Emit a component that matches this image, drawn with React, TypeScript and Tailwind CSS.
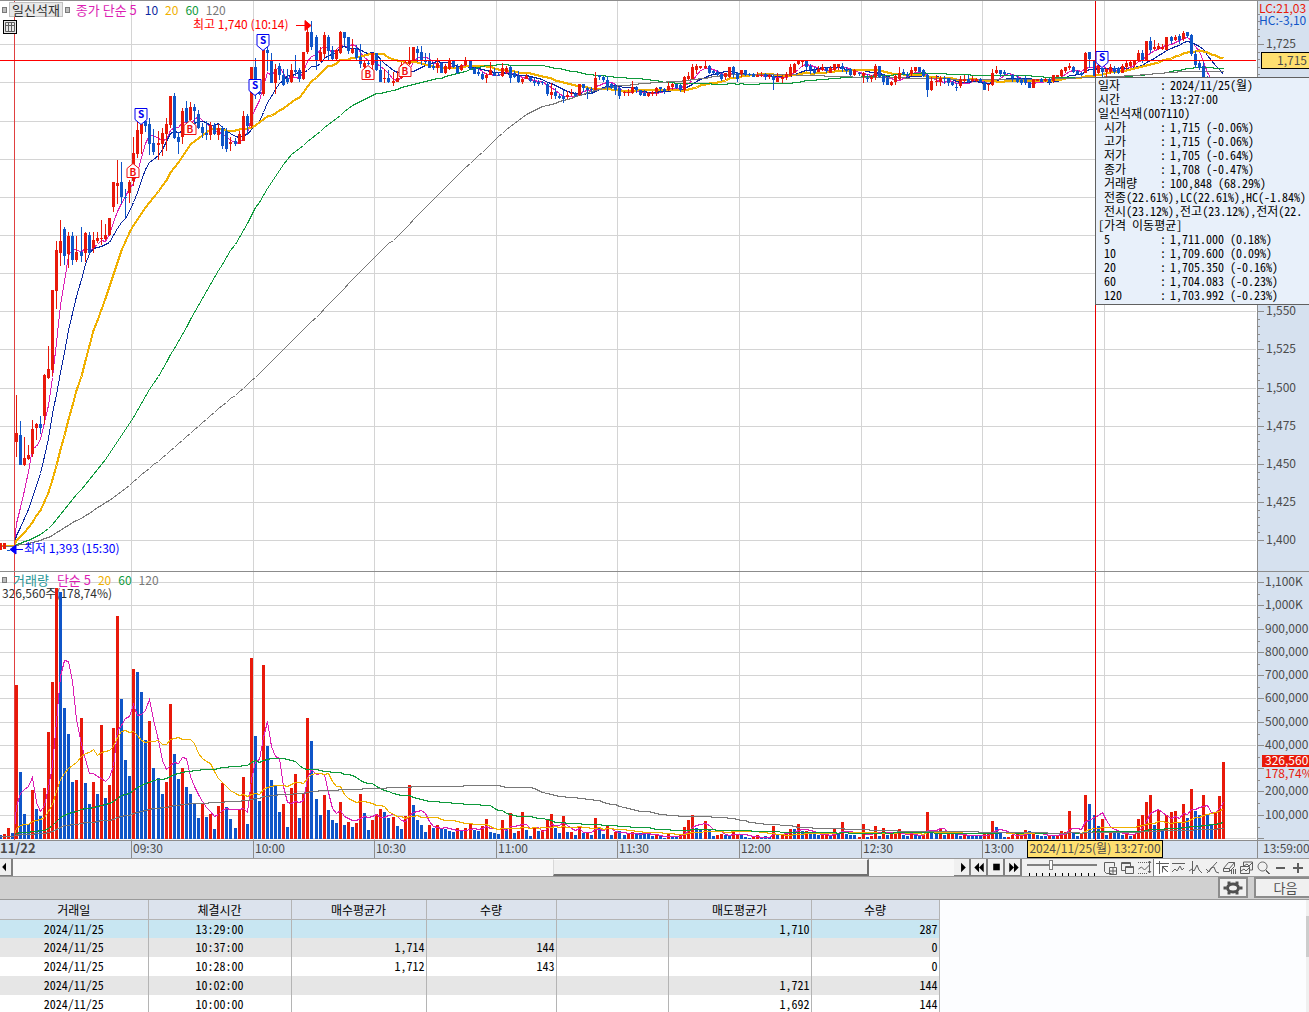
import React from "react";

const CHART_W = 1257;
const PRICE_H = 570;
const VOLUME_H = 268;
const BASELINE = 267;

// one token per minute: direction, then high / body top / body bottom / low
const CANDLES = `
r395/433/442/457 b421/435/465/465 r437/458/465/466 r445/455/459/460 r420/429/454/457 r423/424/428/440
b416/424/428/434 r374/375/416/424 r346/369/378/379 r290/290/370/376 r241/250/291/309 r220/241/253/266
b227/229/256/265 r232/236/254/268 b232/236/260/265 r236/252/260/262 b227/252/256/262 r232/233/253/262
b232/235/253/254 r232/240/248/253 r232/238/241/243 r220/238/239/245 r224/235/239/240 r218/218/235/236
r182/182/207/212 r160/183/186/204 b162/182/197/204 b189/197/198/218 r180/182/193/203 r137/153/181/186
r122/130/154/158 r122/124/134/154 b120/121/126/132 b118/124/144/155 b129/143/152/155 r131/143/145/160
r128/133/144/156 r118/124/134/151 r96/96/125/128 b93/96/138/139 b132/137/142/154 r108/111/137/144
b101/108/122/124 r102/107/120/124 b104/107/111/124 b110/114/128/129 b123/127/133/138 b121/133/135/140
r122/125/135/140 b123/125/134/135 r124/128/135/140 b126/128/146/149 b128/131/149/152 r137/142/144/151
b138/141/144/146 r131/134/144/144 r111/116/141/141 b114/116/126/135 r67/67/126/128 b58/67/95/99
b90/92/94/95 r50/50/94/96 b47/50/53/71 b53/60/83/83 r64/69/83/94 b63/66/75/80
b69/75/85/86 b69/78/82/84 r64/70/82/83 b55/70/72/76 b68/70/79/82 r52/52/79/80
r28/32/52/54 b21/32/47/50 b35/37/61/70 r47/52/60/62 r32/35/54/58 b35/37/51/60
b46/50/59/60 r49/50/59/60 r31/32/53/54 b32/32/38/46 b37/37/51/54 r39/49/53/54
b45/49/58/60 b44/57/64/68 r61/63/67/69 b60/63/64/65 r53/53/65/69 b53/53/70/71
b58/70/82/82 r69/78/79/83 b70/78/82/83 r72/81/83/86 r71/78/82/82 r62/65/78/79
r60/62/66/68 r47/60/64/65 r47/47/60/60 b46/49/53/62 b46/52/61/65 b53/61/62/64
b53/61/68/68 b62/66/68/70 r58/63/68/73 b62/63/73/73 r64/66/73/74 r58/61/69/70
b60/61/67/68 b64/67/73/74 r64/65/70/71 r57/60/65/66 b60/61/69/70 b67/68/74/74
b68/72/74/76 b72/74/79/80 r73/75/78/83 r62/70/75/75 b68/73/76/76 b72/75/76/76
r63/68/76/77 r66/68/72/74 b66/67/78/83 b71/73/77/78 b71/76/82/83 r78/79/82/84
r74/76/79/79 b77/77/81/82 b78/81/83/86 b80/82/84/86 b81/82/83/85 b83/84/94/96
r83/92/95/99 b88/92/96/99 b94/96/98/99 b90/96/99/103 r91/95/97/99 r89/93/94/96
b92/94/96/97 r84/84/95/96 b84/84/88/92 b87/88/90/99 b87/89/90/94 r72/78/90/90
b75/75/77/80 b76/77/80/82 b76/80/87/91 b83/84/88/89 b84/86/90/95 b87/88/96/99
r91/92/93/96 r89/92/93/96 r81/87/93/94 b86/87/90/93 b90/90/95/96 b90/93/96/96
r92/93/96/97 r91/92/94/96 r87/88/92/96 b87/87/89/93 b88/89/91/94 r82/86/90/91
r83/84/87/90 b84/84/88/89 b84/85/90/92 r76/77/90/93 r72/76/79/80 r64/67/79/79
r64/66/70/74 r66/66/68/69 r60/66/68/69 b65/66/73/74 b70/71/73/74 b70/72/75/76
b73/74/79/81 r73/73/77/80 r67/67/77/78 b66/67/74/78 b72/73/79/82 r70/70/74/77
b70/70/75/76 b73/74/75/76 b73/74/77/77 r72/75/77/77 r72/75/76/77 b73/74/77/80
r74/75/77/79 b75/76/80/90 r73/78/82/82 r75/77/79/83 r72/74/77/80 r64/67/76/76
r63/64/73/73 r60/61/64/65 r61/61/62/67 b61/61/67/70 b64/66/70/74 b67/70/73/74
r66/69/72/72 r64/67/70/71 b67/68/71/73 r66/68/73/73 r64/64/70/71 r64/64/67/70
b63/66/69/72 b67/69/71/74 b68/69/75/76 r69/70/75/76 b72/73/74/76 r72/73/76/83
b74/78/79/82 r75/77/79/82 r64/66/77/80 b66/66/77/78 b74/76/82/85 b76/78/85/85
r81/82/85/86 r75/76/82/85 r67/73/79/80 b69/72/74/75 b72/74/76/78 r67/70/74/76
r67/67/71/72 b67/67/72/72 b69/70/76/77 b73/75/90/97 r77/81/90/91 r75/81/82/86
r76/78/82/86 b76/78/79/84 b78/78/83/86 b81/82/85/86 b83/87/88/91 r76/79/86/88
r75/79/81/83 b75/79/82/83 r76/79/81/82 r78/79/81/82 b78/79/82/83 b81/82/90/90
r84/84/85/91 r69/73/85/86 r66/70/73/74 b70/70/74/77 b70/72/74/75 b73/73/74/74
b74/75/78/82 b75/78/82/83 b78/80/83/85 b76/79/83/85 b82/82/88/88 r79/79/88/88
r79/79/81/81 b78/79/82/82 r78/79/81/82 b78/79/82/85 r75/75/81/83 r75/75/77/77
r69/70/76/77 r67/67/71/73 r63/66/68/70 b66/67/72/73 b70/71/74/75 b72/73/75/76
r52/53/73/73 b52/52/59/68 b60/60/76/76 r63/65/73/74 b68/68/72/77 r68/69/72/77
r64/67/72/74 b66/68/72/74 b67/68/73/74 r64/66/73/73 r60/63/67/70 r61/62/66/67
r60/61/65/67 r50/53/60/62 b50/53/60/63 r41/41/60/60 b37/41/50/53 r40/47/49/50
r43/46/49/50 r44/47/49/50 r37/37/50/50 b36/37/41/44 r35/37/40/41 b34/36/40/44
r31/33/39/41 b32/32/36/38 b34/35/54/56 b51/54/65/68 b61/63/68/70 b62/66/83/84
b76/78/88/90 b82/84/92/94 r86/88/93/95 r84/86/92/93 r82/84/90/92`;

// one token per minute: direction and bar height
const VOLUMES = `
r154 b67 b25 b15 r49 b30 b23 r51 r107 r157 r251 b247 b131 b105 b57 r59 r121 b56 b35 r57
b45 r114 b41 r54 r111 r223 b140 b79 b63 r170 b167 b147 b99 r118 b71 b61 b45 r57 r135 b85
b60 r71 b52 b45 b35 b21 r35 b22 r25 b10 r33 r56 b32 b20 b11 r29 r62 b15 r181 b103
b38 r174 b93 b59 b53 b27 r35 b12 r51 r65 b21 r46 r121 b98 b40 b24 r44 b29 b19 b16
r37 b14 r17 b12 r16 r45 b26 b9 r19 r25 r30 b27 b21 r22 b13 b10 r23 r54 b34 b19
b14 b7 r14 b11 r14 b11 b10 b8 b7 r11 b8 r11 r15 b9 b8 r13 r20 b7 b6 b5
r19 b10 r26 b6 r8 r27 b9 b3 r12 b8 r9 r19 r25 b11 b6 r23 b7 r7 b4 r13
b6 r6 b4 r21 b11 b5 r13 b4 r7 b8 b4 r5 r7 b5 b6 b6 b5 b3 r4 b3
b1 r6 b3 b3 r4 r12 r19 r24 b11 b9 r18 b9 b3 r4 r5 b4 b4 r8 r4 b5
b2 b1 r2 r4 b1 b3 b2 r13 b4 r4 r6 r10 b10 r15 b8 r8 b5 b5 b4 r4
r5 b4 r10 b5 r17 b5 b4 b4 r2 r15 b2 r3 r13 b3 r11 b4 r5 r5 r10 b4
b3 r6 b4 b3 r4 r27 b7 b5 r10 b4 r6 r5 b5 b3 r5 b4 b3 b3 b4 r5
r7 r18 b12 b6 b2 r2 r4 r6 r5 r9 b8 r6 b4 b3 b3 r4 b4 r4 r8 r7
r28 b7 b3 r6 r44 b35 b24 b13 r20 b4 r6 b7 b7 b4 r6 b3 r5 r20 r24 r37
r44 b14 r29 b9 r24 r27 r28 b16 r35 b21 r50 b28 b24 r44 b25 b15 r26 r43 r77`;

const UP = "#e8190a";
const DOWN = "#0f55c8";
const GRID = "#d4d4d4";

const candles = CANDLES.trim().split(/\s+/).map((token) => {
  const [high, top, bottom, low] = token.slice(1).split("/").map(Number);
  const up = token[0] === "r";
  return { up, high, top, bottom, low, close: up ? top : bottom };
});

const volumes = VOLUMES.trim().split(/\s+/).map((token) => ({
  up: token[0] === "r",
  height: Number(token.slice(1)),
}));

const slotX = (i: number) => Math.floor(16.2 + 4.052 * i);

function average(values: number[], before: number, period: number) {
  return values.map((_, i) => {
    let sum = 0;
    for (let k = i - period + 1; k <= i; k++) sum += k < 0 ? before : values[k];
    return sum / period;
  });
}

const toPoints = (values: number[], startY: number) =>
  `0,${startY} 14,${startY} ` +
  values.map((v, i) => `${slotX(i) + 0.5},${Math.round(v) + 0.5}`).join(" ");

const closes = candles.map((c) => c.close);
const heights = volumes.map((v) => v.height);

const priceLines = [
  { period: 5, color: "#dc1eb4", width: 1 },
  { period: 10, color: "#0a28a0", width: 1 },
  { period: 20, color: "#f0b000", width: 2 },
  { period: 60, color: "#0f9a3c", width: 1 },
  { period: 120, color: "#787878", width: 1 },
].map((l) => ({ ...l, points: toPoints(average(closes, 546, l.period), 546) }));

const volumeLines = [
  { period: 5, color: "#dc1eb4" },
  { period: 20, color: "#f0b000" },
  { period: 60, color: "#0f9a3c" },
  { period: 120, color: "#787878" },
].map((l) => ({
  ...l,
  points: toPoints(average(heights, 3, l.period).map((v) => BASELINE - v), BASELINE - 3),
}));

const gridX = [131, 253, 374, 496, 617, 739, 861, 982, 1104];
const priceGridY = [44, 82, 121, 159, 197, 235, 273, 311, 349, 388, 426, 464, 502, 540];
const volumeGridY = [10, 33, 57, 80, 103, 126, 150, 173, 196, 219, 243, 266];

const markers = [
  { side: "S", x: 141, y: 108 },
  { side: "S", x: 255, y: 79 },
  { side: "S", x: 263, y: 34 },
  { side: "S", x: 1102, y: 51 },
  { side: "B", x: 133, y: 163 },
  { side: "B", x: 190, y: 120 },
  { side: "B", x: 368, y: 65 },
  { side: "B", x: 405, y: 62 },
];

function Marker({ side, x, y }: { side: string; x: number; y: number }) {
  const sell = side === "S";
  const color = sell ? "#0000f0" : "#f01010";
  const d = sell
    ? `M${x - 6} ${y + 0.5}h12v11l-6 5l-6 -5z`
    : `M${x} ${y + 0.5}l6 5v9h-12v-9z`;
  return (
    <g>
      <path d={d} fill="#fff" stroke={color} />
      <text x={x} y={sell ? y + 10 : y + 13} textAnchor="middle" fill={color} className="text-[10px] font-bold">
        {side}
      </text>
    </g>
  );
}

function PriceChart() {
  return (
    <svg
      viewBox={`0 0 ${CHART_W} ${PRICE_H}`}
      preserveAspectRatio="none"
      className="block h-[570px] w-full"
      role="img"
      aria-label="가격 차트"
    >
      <g fill={GRID} shapeRendering="crispEdges">
        {priceGridY.map((y) => <rect key={y} x={0} y={y - 1} width={1256} height={1} />)}
        {gridX.map((x) => <rect key={x} x={x} y={0} width={1} height={PRICE_H} />)}
      </g>
      <g fill="none" shapeRendering="crispEdges" transform="translate(0 -1)">
        {priceLines.map((l) => (
          <polyline key={l.period} points={l.points} stroke={l.color} strokeWidth={l.width} />
        ))}
      </g>
      <g shapeRendering="crispEdges" transform="translate(0 -1)">
        <rect x={0} y={543} width={2} height={7} fill={UP} />
        <rect x={3} y={543} width={3} height={6} fill={UP} />
        <rect x={7} y={550} width={3} height={1} fill={DOWN} />
        {candles.map((c, i) => (
          <g key={i} fill={c.up ? UP : DOWN}>
            <rect x={slotX(i)} y={c.high} width={1} height={c.low - c.high} />
            <rect x={slotX(i) - 1} y={c.top} width={3} height={Math.max(1, c.bottom - c.top)} />
          </g>
        ))}
      </g>
      <g shapeRendering="crispEdges">
        <rect x={14} y={0} width={1} height={PRICE_H} fill="#e04040" />
        <rect x={0} y={59} width={1256} height={1} fill="#ff0000" />
        <rect x={1095} y={0} width={1} height={PRICE_H} fill="#e80000" />
      </g>
      <g transform="translate(0 -1)">
        {markers.map((m) => <Marker key={`${m.side}${m.x}`} {...m} />)}
      </g>
      <text x={193} y={28} fill="#ff0000">최고 1,740 (10:14)</text>
      <path d="M296 24.5h10M305 19.5l6 5l-6 5z" fill="#ff0000" stroke="#ff0000" />
      <text x={24} y={552} fill="#0000ff">최저 1,393 (15:30)</text>
      <path d="M23 548.5h-8M16 544l-6 4.500l6 4.500z" fill="#0000ff" stroke="#0000ff" />
    </svg>
  );
}

function VolumeChart() {
  return (
    <svg
      viewBox={`0 0 ${CHART_W} ${VOLUME_H}`}
      preserveAspectRatio="none"
      className="relative block h-[268px] w-full"
      role="img"
      aria-label="거래량 차트"
    >
      <g shapeRendering="crispEdges">
        {volumeGridY.map((y) => <rect key={y} x={0} y={y} width={1256} height={1} fill={GRID} />)}
        {gridX.map((x) => <rect key={x} x={x} y={0} width={1} height={VOLUME_H} fill={GRID} />)}
        <rect x={0} y={263} width={2} height={4} fill={DOWN} />
        <rect x={3} y={262} width={3} height={5} fill={UP} />
        <rect x={7} y={256} width={3} height={11} fill={UP} />
        <rect x={11} y={261} width={3} height={6} fill={DOWN} />
        {volumes.map((v, i) => (
          <rect key={i} x={slotX(i) - 1} y={BASELINE - v.height} width={3} height={v.height} fill={v.up ? UP : DOWN} />
        ))}
        {volumeLines.map((l) => (
          <polyline key={l.period} points={l.points} fill="none" stroke={l.color} />
        ))}
        <rect x={14} y={0} width={1} height={VOLUME_H} fill="#e04040" />
        <rect x={1095} y={0} width={1} height={VOLUME_H} fill="#e80000" />
      </g>
    </svg>
  );
}

// levels behind the info box get a tick but no label
const priceLabel = (y: number, i: number) => (y > 90 && y < 300 ? null : (1725 - 25 * i).toLocaleString("en-US"));

function PriceAxis() {
  return (
    <svg className="block h-[570px] w-full" fill="#4b4b4b" aria-label="가격 축" role="img">
      {priceGridY.map((y, i) => (
        <g key={y}>
          <rect x={0} y={y - 1} width={6} height={1} fill="#8c8c8c" />
          {[8, 15, 23, 30].map((dy) => (
            <rect key={dy} x={0} y={y - 1 - dy} width={2} height={1} fill="#8c8c8c" />
          ))}
          {priceLabel(y, i) && <text x={8} y={y + 3}>{priceLabel(y, i)}</text>}
        </g>
      ))}
      <text x={1} y={12} fill="#e8190a">LC:21,03</text>
      <text x={1} y={24} fill="#0f55c8">HC:-3,10</text>
      <rect x={3.5} y={51.5} width={60} height={16} fill="#ffe070" stroke="#000" />
      <text x={19} y={64}>1,715</text>
    </svg>
  );
}

function VolumeAxis() {
  const labels = ["1,100K", "1,000K", "900,000", "800,000", "700,000", "600,000", "500,000", "400,000", "", "200,000", "100,000", ""];
  return (
    <svg className="block h-[268px] w-full" fill="#4b4b4b" aria-label="거래량 축" role="img">
      {volumeGridY.map((y, i) => (
        <g key={y}>
          <rect x={0} y={y} width={6} height={1} fill="#8c8c8c" />
          {i < 11 && <rect x={0} y={y + 12} width={2} height={1} fill="#8c8c8c" />}
          <text x={7} y={y + 4}>{labels[i]}</text>
        </g>
      ))}
      <rect x={4} y={183} width={60} height={12} fill="#e8190a" />
      <text x={7} y={193} fill="#fff">326,560</text>
      <text x={7} y={206} fill="#e8190a">178,74%</text>
    </svg>
  );
}

const Dot = () => <span className="h-[6px] w-[5px] shrink-0 border border-[#7a7a7a] bg-[#bdbdbd]" />;

const ohlc = [
  ["시가", "1,715 (-0.06%)"],
  ["고가", "1,715 (-0.06%)"],
  ["저가", "1,705 (-0.64%)"],
  ["종가", "1,708 (-0.47%)"],
  ["거래량", "100,848 (68.29%)"],
];

const averages = [
  ["5", "1,711.000 (0.18%)"],
  ["10", "1,709.600 (0.09%)"],
  ["20", "1,705.350 (-0.16%)"],
  ["60", "1,704.083 (-0.23%)"],
  ["120", "1,703.992 (-0.23%)"],
];

function InfoRow({ label, value, indent = true }: { label: string; value: string; indent?: boolean }) {
  return (
    <div className="flex">
      <span className={indent ? "w-[62px] pl-[6px]" : "w-[62px]"}>{label}</span>
      <span className="w-[10px]">:</span>
      <span>{value}</span>
    </div>
  );
}

function InfoBox() {
  return (
    <div className="absolute top-[76px] right-0 w-[214px] overflow-hidden border border-r-0 border-[#606060] bg-[#e8f0fa] pb-[2px] pl-[2px] font-['Noto_Sans_Mono_CJK_KR','Noto_Sans_CJK_KR',monospace] text-[12px] leading-[14px] whitespace-nowrap text-black">
      <InfoRow label="일자" value="2024/11/25(월)" indent={false} />
      <InfoRow label="시간" value="13:27:00" indent={false} />
      <div>일신석재(007110)</div>
      {ohlc.map(([label, value]) => <InfoRow key={label} label={label} value={value} />)}
      <div className="pl-[6px]">전종(22.61%),LC(22.61%),HC(-1.84%)</div>
      <div className="pl-[6px]">전시(23.12%),전고(23.12%),전저(22.</div>
      <div>[가격 이동평균]</div>
      {averages.map(([label, value]) => <InfoRow key={label} label={label} value={value} />)}
    </div>
  );
}

const hours = ["09:30", "10:00", "10:30", "11:00", "11:30", "12:00", "12:30", "13:00", ""];

function TimeAxis() {
  return (
    <div className="flex h-[18px] border-t border-[#8c8c8c] bg-[#d6e1ef] leading-[14px] text-[#4b4b4b]">
      <div className="relative grid min-w-0 flex-1 grid-cols-[131fr_122fr_121fr_122fr_121fr_122fr_122fr_121fr_122fr_153fr]">
        <span className="text-[13px] font-bold">11/22</span>
        {hours.map((h) => <span key={h} className="border-l border-[#8c8c8c] pl-px">{h}</span>)}
        <span className="absolute -top-px left-[81.7%] h-[18px] w-[136px] border border-black bg-[#ffe070] text-center whitespace-nowrap">
          2024/11/25(월) 13:27:00
        </span>
      </div>
      <div className="w-[52px] shrink-0 overflow-hidden border-l border-[#8c8c8c] pl-[5px]">13:59:00</div>
    </div>
  );
}

const playback = [
  { name: "재생", d: "M7 4l5 5l-5 5z" },
  { name: "뒤로", d: "M8 4v10l-5 -5zM13 4v10l-5 -5z" },
  { name: "정지", d: "M5 5h7v7h-7z" },
  { name: "앞으로", d: "M4 4v10l5 -5zM9 4v10l5 -5z" },
];

const tools = [
  { name: "차트 추가", d: "M9.500 14.500h-5l-2 -2v-9h10v4M7.500 8.500h7v7h-7zM11 8.500v7M7.500 12h7" },
  { name: "차트 겹치기", d: "M6.500 11.500h-4v-8h9v4M2.500 4.500h9M6.500 7.500h8v7h-8zM6.500 8.500h8" },
  { name: "구간 표시", d: "M2 3.500h1m1 0h1m1 0h1m1 0h1m1 0h1M2 14.500h1m1 0h1m1 0h1m1 0h1m1 0h1M2.500 10l3 -2l3 3l5 -5M13.500 2v12M12 4l1.500 -2l1.500 2M12 12l1.500 2l1.500 -2" },
  { name: "십자선", d: "M2 4.500h13M5.500 2v13M8 7.500h6M8.500 7.500v6M9 8l5 5M9 8.500l4 4" },
  { name: "수평선", d: "M2 4.500h13M2 13l3 -3l2 2l3 -5l2 4l2 -2" },
  { name: "수직선", d: "M5.500 2v13M2 12l3 -2l2 2l3 -6l2 5l3 3" },
  { name: "추세선", d: "M3 14l10 -11M2 10l3 3l2 -4l3 -1l2 5l3 1" },
  { name: "지우기", d: "M2.500 9.500l5 -6h6l-5 6zM2.500 9.500v3h6v-3M8.500 12.500l5 -5v-4M10.500 11v4M12.500 10v5M14.500 10v5" },
  { name: "차트 복사", d: "M5.500 7v-4h9v8h-3M6 7l3 -2l2 2l3 -3M2.500 7.500h9v7h-9zM3 12l3 -2l2 2l3 -3" },
  { name: "확대경", d: "M7.500 3a4.500 4.500 0 1 0 .1 0M11 11l4 4M11 12l3 3" },
  { name: "축소", d: "M4 8.500h9M4 9.500h9" },
  { name: "확대", d: "M4 8.500h10M4 9.500h10M8.500 4v10M9.500 4v10" },
];

function Toolbar() {
  return (
    <div className="flex h-[19px] border-t border-b border-[#9a9a9a] bg-[#f0f0f0]">
      <button aria-label="왼쪽으로" className="w-[13px] shrink-0 border-r-2 border-b border-[#808080]">
        <svg viewBox="0 0 11 17" className="h-[16px] w-[11px]"><path d="M6 4v9l-4 -4.500z" /></svg>
      </button>
      <div className="grid min-w-0 flex-1 grid-cols-[541fr_316fr_85fr] bg-[#f8f8f8]">
        <div className="col-start-2 border-t border-r-2 border-b-2 border-l border-t-white border-r-[#707070] border-b-[#707070] border-l-[#d8d8d8] bg-[#f0f0f0]" />
      </div>
      {playback.map((b) => (
        <button key={b.name} aria-label={b.name} className="w-[17px] shrink-0 border-r-2 border-b border-[#808080] bg-[#f0f0f0]">
          <svg viewBox="0 0 17 17" className="h-[16px] w-[17px]"><path d={b.d} /></svg>
        </button>
      ))}
      <div className="ml-[5px] flex w-[70px] shrink-0 flex-col justify-between">
        <input
          type="range"
          aria-label="봉 간격"
          defaultValue={34}
          className="mt-[1px] h-[10px] w-full appearance-none bg-[linear-gradient(#808080,#808080)] bg-[length:100%_2px] bg-center bg-no-repeat [&::-webkit-slider-thumb]:h-[10px] [&::-webkit-slider-thumb]:w-[4px] [&::-webkit-slider-thumb]:appearance-none [&::-webkit-slider-thumb]:border [&::-webkit-slider-thumb]:border-[#808080] [&::-webkit-slider-thumb]:bg-white"
        />
        <div className="flex justify-between px-[2px]">
          {Array.from({ length: 11 }, (_, i) => <span key={i} className="h-[3px] w-px bg-black" />)}
        </div>
      </div>
      <div className="ml-[5px] flex shrink-0 pr-[3px]">
        {tools.map((t) => (
          <button key={t.name} aria-label={t.name} className={t.name === "십자선" ? "w-[17px] border-l border-[#808080] bg-white" : "w-[17px]"}>
            <svg viewBox="0 0 17 17" className="h-[17px] w-[17px]" fill="none" stroke="#5e5e5e"><path d={t.d} /></svg>
          </button>
        ))}
      </div>
    </div>
  );
}

const columns = ["거래일", "체결시간", "매수평균가", "수량", "", "매도평균가", "수량"];

const trades = [
  ["2024/11/25", "13:29:00", "", "", "", "1,710", "287"],
  ["2024/11/25", "10:37:00", "1,714", "144", "", "", "0"],
  ["2024/11/25", "10:28:00", "1,712", "143", "", "", "0"],
  ["2024/11/25", "10:02:00", "", "", "", "1,721", "144"],
  ["2024/11/25", "10:00:00", "", "", "", "1,692", "144"],
];

function rowColor(i: number) {
  if (i === 0) return "bg-[#c8e6f2]";
  return i % 2 ? "bg-[#e6e6e6]" : "bg-white";
}

function TradeTable() {
  return (
    <div className="flex min-h-0 flex-1 overflow-hidden bg-[#fcfdff]">
      <div className="min-w-0 flex-1">
        <table className="w-[939px] table-fixed border-collapse font-['Noto_Sans_Mono_CJK_KR','Noto_Sans_CJK_KR',monospace] text-[12px] leading-[17px] text-black">
          <colgroup>
            <col className="w-[148px]" />
            <col className="w-[143px]" />
            <col className="w-[135px]" />
            <col className="w-[130px]" />
            <col className="w-[112px]" />
            <col className="w-[143px]" />
            <col className="w-[128px]" />
          </colgroup>
          <thead>
            <tr className="h-[19px] bg-[#dce3ed]">
              {columns.map((c, i) => (
                <th key={i} scope="col" className="border-r border-b border-[#b4b4b4] p-0 font-normal">{c}</th>
              ))}
            </tr>
          </thead>
          <tbody>
            {trades.map((row, i) => (
              <tr key={i} className={`h-[19px] ${rowColor(i)}`}>
                {row.map((cell, j) => (
                  <td key={j} className={`border-r border-[#b4b4b4] p-0 align-top ${j < 2 ? "text-center" : "pr-[1px] text-right"}`}>{cell}</td>
                ))}
              </tr>
            ))}
          </tbody>
        </table>
      </div>
      <div className="w-[3px] shrink-0 bg-[#f0f0f0] pt-[16px]">
        <div className="h-[41px] bg-[#cdcdcd]" />
      </div>
    </div>
  );
}

export default function App() {
  return (
    <div className="flex h-screen flex-col overflow-hidden bg-white font-['Noto_Sans_CJK_KR',sans-serif] text-[12px] leading-[14px]">
      <div className="relative flex border-t border-[#8c8c8c]">
        <div className="relative min-w-0 flex-1">
          <PriceChart />
          <div className="absolute top-px left-[2px] flex items-center gap-[2px] text-[#dc1eb4]">
            <Dot />
            <button className="border border-[#c0c0c0] bg-[#e8e8e8] px-[2px] text-[13px] leading-[13px] text-[#303030]">일신석재</button>
            <Dot />
            <span className="ml-[4px] text-[13px]">종가 단순 5</span>
            <span className="ml-[6px] text-[#0a28a0]">10</span>
            <span className="ml-[5px] text-[#f0b000]">20</span>
            <span className="ml-[5px] text-[#0f9a3c]">60</span>
            <span className="ml-[5px] text-[#787878]">120</span>
          </div>
          <button aria-label="데이터 표" className="absolute top-[19px] left-[3px] h-[14px] w-[14px] border border-black bg-[#e8e8e8]">
            <svg viewBox="0 0 12 12" className="h-[12px] w-[12px]" fill="none" stroke="#606060">
              <path d="M1.500 1.500h9v9h-9zM4.500 1v10M7.500 1v10M1 4.500h10" />
            </svg>
          </button>
        </div>
        <div className="w-[52px] shrink-0 border-l border-[#8c8c8c] bg-[#d6e1ef]"><PriceAxis /></div>
        <InfoBox />
      </div>
      <div className="flex border-t border-[#8c8c8c]">
        <div className="relative min-w-0 flex-1">
          <div className="absolute top-[14px] left-[2px] text-[#303030]">326,560주(178,74%)</div>
          <VolumeChart />
          <div className="absolute top-px left-[2px] flex items-center">
            <Dot />
            <span className="ml-[6px] text-[13px] text-[#289696]">거래량</span>
            <span className="ml-[8px] text-[13px] text-[#dc1eb4]">단순 5</span>
            <span className="ml-[7px] text-[#f0b000]">20</span>
            <span className="ml-[7px] text-[#0f9a3c]">60</span>
            <span className="ml-[7px] text-[#787878]">120</span>
          </div>
        </div>
        <div className="w-[52px] shrink-0 border-l border-[#8c8c8c] bg-[#d6e1ef]"><VolumeAxis /></div>
      </div>
      <TimeAxis />
      <Toolbar />
      <div className="flex h-[23px] justify-end gap-[6px] border-b border-[#9a9a9a] bg-[#d0d0d0] pb-[1px]">
        <button aria-label="설정" className="flex w-[30px] items-center justify-center border-2 border-[#8c8c8c] bg-[#f0f0f0]">
          <svg viewBox="0 0 20 14" className="h-[14px] w-[20px]" fill="none" stroke="#505050">
            <ellipse cx="10" cy="7" rx="5.500" ry="4" strokeWidth="3" />
            <path d="M6 .5v3M14 .5v3M6 10.500v3M14 10.500v3M.5 7h3M16.500 7h3" strokeWidth="3" />
          </svg>
        </button>
        <button className="w-[55px] border-2 border-r-0 border-[#8c8c8c] bg-[#f0f0f0] pl-[6px] text-[13px] text-[#505050]">다음</button>
      </div>
      <TradeTable />
    </div>
  );
}
